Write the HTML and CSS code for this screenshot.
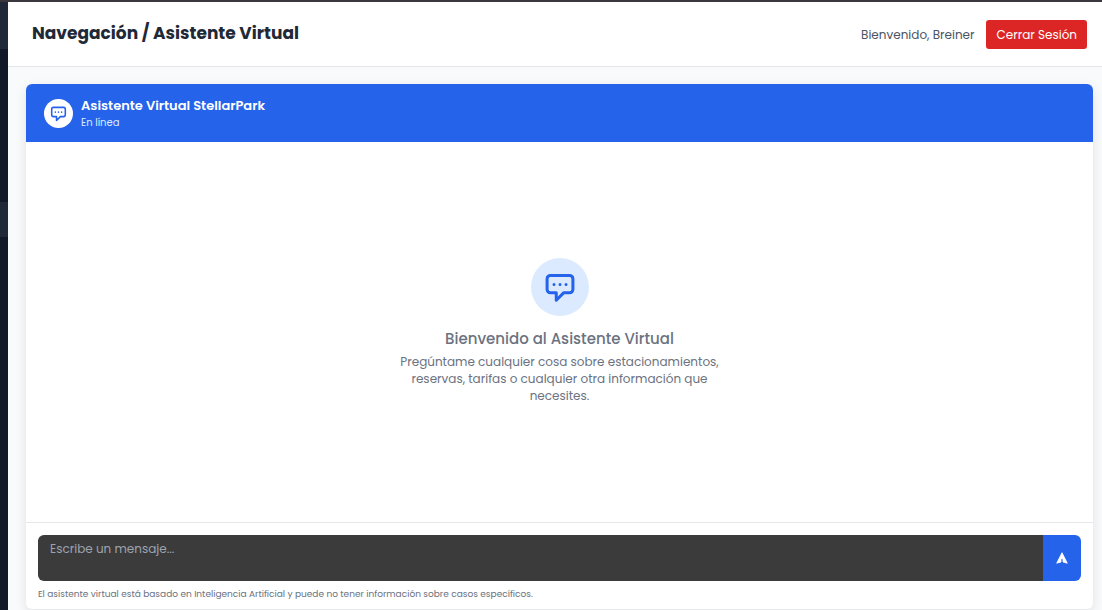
FILE: index.html
```html
<!DOCTYPE html>
<html lang="es">
<head>
<meta charset="utf-8">
<meta name="viewport" content="width=device-width, initial-scale=1">
<title>Asistente Virtual</title>
<link rel="stylesheet" href="styles.css">
</head>
<body>
<svg class="sprite" aria-hidden="true">
  <symbol id="chat" viewBox="0 0 24 24">
    <path d="M5.6 4.3h12.8a2.2 2.2 0 0 1 2.2 2.2v7.2a2.2 2.2 0 0 1-2.2 2.2h-4L9.5 20.8v-4.9H5.6a2.2 2.2 0 0 1-2.2-2.2V6.5a2.2 2.2 0 0 1 2.2-2.2z" fill="none" stroke="currentColor" stroke-width="2" stroke-linejoin="round"/>
    <path d="M8 10.3h.01M12 10.3h.01M16 10.3h.01" fill="none" stroke="currentColor" stroke-width="2" stroke-linecap="round"/>
  </symbol>
</svg>
<div class="app">
  <aside class="sidebar">
    <div class="sidebar-brand"></div>
    <nav class="sidebar-nav"><div class="sidebar-active"></div></nav>
  </aside>
  <div class="page">
    <header class="topbar">
      <h1 class="title">Navegación / Asistente Virtual</h1>
      <div class="account">
        <span class="greeting">Bienvenido, Breiner</span>
        <button class="logout" type="button">Cerrar Sesión</button>
      </div>
    </header>
    <main class="content">
      <section class="chat">
        <header class="chat-header">
          <div class="avatar"><svg class="avatar-icon" aria-hidden="true"><use href="#chat"/></svg></div>
          <div>
            <h2 class="chat-name">Asistente Virtual StellarPark</h2>
            <p class="chat-status">En línea</p>
          </div>
        </header>
        <div class="messages">
          <div class="welcome-badge"><svg class="welcome-icon" aria-hidden="true"><use href="#chat"/></svg></div>
          <h3 class="welcome-title">Bienvenido al Asistente Virtual</h3>
          <p class="welcome-text">Pregúntame cualquier cosa sobre estacionamientos, reservas, tarifas o cualquier otra información que necesites.</p>
        </div>
        <form class="composer">
          <div class="composer-row">
            <textarea class="message-input" aria-label="Mensaje" placeholder="Escribe un mensaje..."></textarea>
            <button class="send" type="button" aria-label="Enviar">
              <svg class="send-icon" viewBox="0 0 12 12" aria-hidden="true"><path d="M6 0.7 11.3 11.2 7 10V6.7H5V10L.7 11.2z" fill="currentColor" stroke="currentColor" stroke-width=".8" stroke-linejoin="round"/></svg>
            </button>
          </div>
          <p class="notice">El asistente virtual está basado en Inteligencia Artificial y puede no tener información sobre casos específicos.</p>
        </form>
      </section>
    </main>
  </div>
</div>
</body>
</html>
```
FILE: styles.css
```css
*, *::before, *::after { box-sizing: border-box; }
h1, h2, h3, p { margin: 0; }
body {
  margin: 0;
  font-family: Poppins, Inter, "Open Sans", sans-serif;
  color: #1f2937;
  background: #f9fafb;
}
button, textarea { font: inherit; border: 0; }
.sprite { display: none; }
.app {
  display: flex;
  height: 100vh;
  border-top: 2px solid #3a383d;
  overflow: hidden;
}
.sidebar {
  flex: 0 0 8px;
  background: #111827;
}
.sidebar-brand { height: 47px; background: #1f2937; }
.sidebar-nav { padding-top: 153px; }
.sidebar-active { height: 35px; background: #1f2937; }
.page {
  flex: 1;
  min-width: 0;
  display: flex;
  flex-direction: column;
}
.topbar {
  display: flex;
  align-items: flex-start;
  justify-content: space-between;
  padding: 18px 15px 17px 24px;
  background: #fff;
  border-bottom: 1px solid #e5e7eb;
}
.title { font-size: 17px; line-height: 27px; font-weight: 700; }
.account { display: flex; align-items: center; gap: 12px; }
.greeting { font-size: 12px; line-height: 18px; color: #4b5563; }
.logout {
  height: 29px;
  padding: 0 10px;
  border-radius: 3px;
  background: #dc2626;
  color: #fff;
  font-size: 12px;
  line-height: 18px;
}
.content {
  flex: 1;
  min-height: 0;
  display: flex;
  padding: 17px 9px 1px 18px;
}
.chat {
  flex: 1;
  display: flex;
  flex-direction: column;
  border-radius: 6px;
  background: #fff;
  box-shadow: 0 4px 12px rgba(0, 0, 0, .1);
  overflow: hidden;
}
.chat-header {
  display: flex;
  align-items: center;
  gap: 8px;
  height: 58px;
  padding: 0 18px;
  background: #2563eb;
  color: #fff;
}
.avatar, .welcome-badge {
  display: grid;
  place-items: center;
  border-radius: 50%;
  color: #2563eb;
}
.avatar { width: 29px; height: 29px; background: #fff; }
.avatar-icon { width: 19px; height: 19px; }
.chat-name { font-size: 13px; line-height: 18px; font-weight: 600; }
.chat-status { font-size: 10px; line-height: 15px; color: #dbeafe; }
.messages {
  flex: 1;
  display: flex;
  flex-direction: column;
  align-items: center;
  justify-content: center;
  padding-bottom: 2px;
  color: #6b7280;
  text-align: center;
}
.welcome-badge {
  width: 58px;
  height: 58px;
  margin-bottom: 12px;
  background: #dbeafe;
}
.welcome-icon { width: 36px; height: 36px; }
.welcome-title { margin-bottom: 4px; font-size: 15px; line-height: 21px; font-weight: 500; }
.welcome-text { max-width: 322px; font-size: 12px; line-height: 17px; }
.composer { padding: 12px 12px 8px; border-top: 1px solid #e5e7eb; }
.composer-row {
  display: flex;
  height: 46px;
  border-radius: 6px;
  overflow: hidden;
}
.message-input {
  flex: 1;
  min-width: 0;
  padding: 5px 12px;
  background: #3b3b3b;
  color: #fff;
  font-size: 12px;
  line-height: 18px;
  resize: none;
}
.message-input::placeholder { color: #9ca3af; }
.send {
  display: grid;
  place-items: center;
  width: 38px;
  padding: 0;
  background: #2563eb;
  color: #fff;
}
.send-icon { width: 12px; height: 12px; }
.notice { margin-top: 7px; font-size: 9px; line-height: 13px; color: #6b7280; }
```
